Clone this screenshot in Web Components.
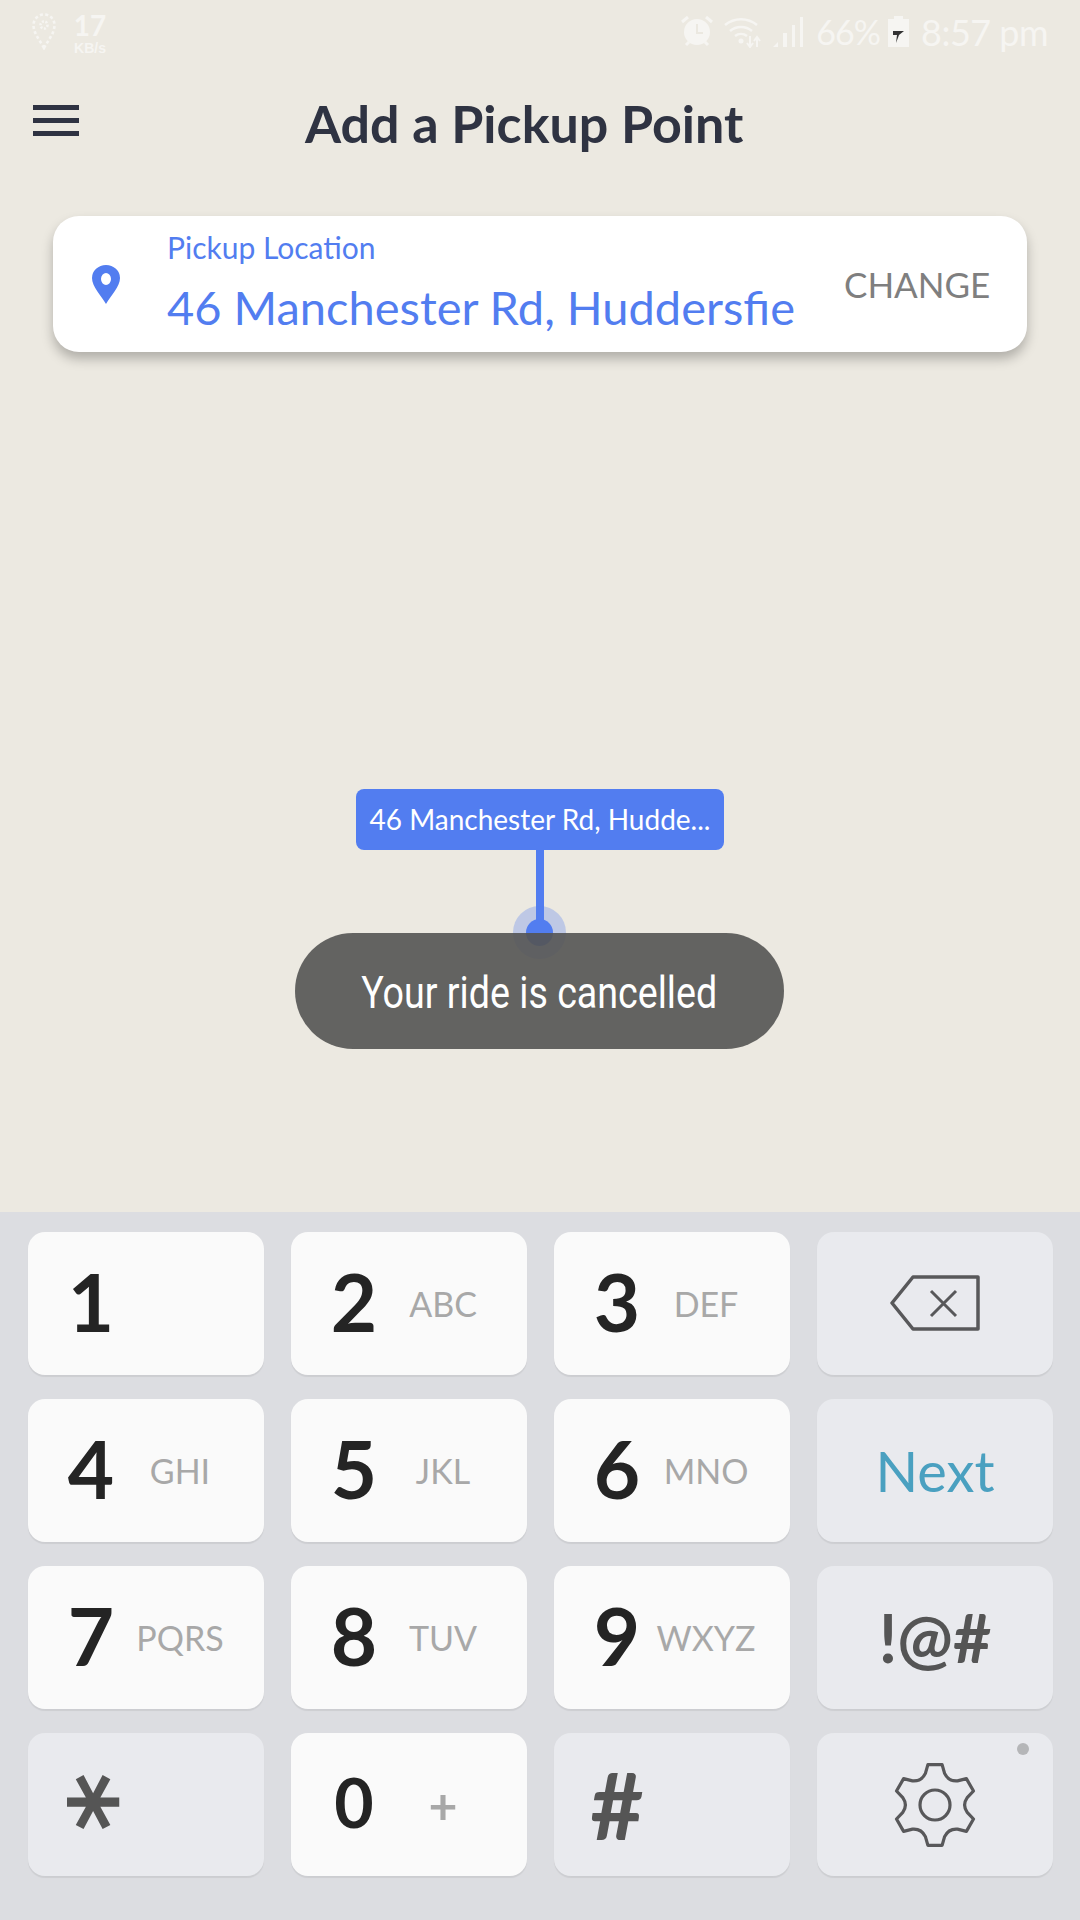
<!DOCTYPE html>
<html>
<head>
<meta charset="utf-8">
<style>
html,body{margin:0;padding:0;}
body{width:1080px;height:1920px;display:flex;flex-direction:column;overflow:hidden;background:#ece9e1;font-family:"Lato",sans-serif;}
</style>
</head>
<body>
<status-bar></status-bar>
<map-view>
  <app-header>Add a Pickup Point</app-header>
  <pickup-card label="Pickup Location" action="CHANGE">46 Manchester Rd, Huddersfie</pickup-card>
  <map-marker slot="over">46 Manchester Rd, Hudde...</map-marker>
  <toast-message slot="over">Your ride is cancelled</toast-message>
</map-view>
<dial-pad>
  <dial-key>1</dial-key>
  <dial-key sub="ABC">2</dial-key>
  <dial-key sub="DEF">3</dial-key>
  <dial-key kind="center"><svg width="90" height="56" viewBox="0 0 90 56" fill="none" stroke="#58585a" stroke-width="3.5" stroke-linejoin="round"><path d="M2 28 L23 2 H88 V54 H23 Z"/><path d="M41 16 L66 41 M66 16 L41 41" stroke-width="3"/></svg></dial-key>
  <dial-key sub="GHI">4</dial-key>
  <dial-key sub="JKL">5</dial-key>
  <dial-key sub="MNO">6</dial-key>
  <dial-key kind="center" tone="next">Next</dial-key>
  <dial-key sub="PQRS">7</dial-key>
  <dial-key sub="TUV">8</dial-key>
  <dial-key sub="WXYZ">9</dial-key>
  <dial-key kind="center" tone="symbols">!@#</dial-key>
  <dial-key kind="func" tone="star">*</dial-key>
  <dial-key sub="+" tone="plus">0</dial-key>
  <dial-key kind="func" tone="hash">#</dial-key>
  <dial-key kind="center" dot><gear-icon></gear-icon></dial-key>
</dial-pad>

<script>
const statusTpl = document.createElement('template');
statusTpl.innerHTML = `
<style>
:host{display:flex;justify-content:space-between;height:62px;color:#f6f5f2;font-family:"Lato",sans-serif;flex:none;}
.left{display:flex;padding:13px 0 0 32px;gap:16px;align-items:flex-start;}
.speed{display:flex;flex-direction:column;align-items:center;width:36px;}
.speed b{font-size:28px;line-height:25px;font-weight:700;}
.speed small{font:700 14px/14px "Liberation Sans",sans-serif;margin-top:3px;}
.right{display:flex;padding:16px 32px 0 0;align-items:flex-start;}
.pct{font-size:34px;line-height:32px;margin:0 8px 0 13px;letter-spacing:-1px;}
.time{font-size:36px;line-height:32px;margin-left:12px;letter-spacing:-.5px;width:127px;white-space:nowrap;}
svg{display:block;flex:none;}
</style>
<div class="left">
  <svg width="24" height="37" viewBox="0 0 24 37" fill="none" stroke="#f6f5f2" stroke-width="2.6" stroke-dasharray="3 2.4"><path d="M12 35 C7 26 1.500 20 1.500 12 A10.500 10.500 0 0 1 22.500 12 C22.500 20 17 26 12 35Z"/><circle cx="12" cy="12" r="3.500" stroke-dasharray="2 1.500"/></svg>
  <div class="speed"><b>17</b><small>KB/s</small></div>
</div>
<div class="right">
  <svg width="32" height="31" viewBox="0 0 32 31" style="margin-right:11px"><path d="M1 6 L7 1 M31 6 L25 1 M5 29 L8 26 M27 29 L24 26" stroke="#f6f5f2" stroke-width="3"/><circle cx="16" cy="16" r="13" fill="#f6f5f2"/><path d="M16 8 V17 H22" fill="none" stroke="#ebe8e0" stroke-width="2"/></svg>
  <svg width="37" height="32" viewBox="0 0 37 32" fill="none" stroke="#f6f5f2" stroke-width="2.500" style="margin-right:11px"><path d="M1 9 A25 25 0 0 1 33 9"/><path d="M6 15 A17 17 0 0 1 28 15"/><path d="M11 20 A10 10 0 0 1 23 20"/><circle cx="17" cy="25" r="2.500" fill="#f6f5f2" stroke="none"/><path d="M26 20 V30 M23 27 L26 31 L29 27 M33 31 V22 M30 25 L33 21 L36 25" stroke-width="2"/></svg>
  <svg width="31" height="31" viewBox="0 0 31 31" fill="#f6f5f2"><path d="M1 31 L6 26 V31Z M11 31 V17 H15 V31Z M20 31 V9 H23 V31Z M28 31 V1 H31 V31Z"/></svg>
  <span class="pct">66%</span>
  <svg width="21" height="31" viewBox="0 0 21 31"><path d="M6 0 H15 V3 H21 V31 H0 V3 H6Z" fill="#f6f5f2"/><path d="M5 15 H16 L11 19 L8 27 L9 19 H5Z" fill="#333"/></svg>
  <span class="time">8:57 pm</span>
</div>`;
class StatusBar extends HTMLElement{
  constructor(){
    super();
    this.attachShadow({mode:'open'});
    this.shadowRoot.appendChild(statusTpl.content.cloneNode(true));
  }
}
customElements.define('status-bar',StatusBar);

const mapTpl = document.createElement('template');
mapTpl.innerHTML = `
<style>
:host{display:block;position:relative;flex:1;background:#ece9e1;}
</style>
<slot></slot>
<slot name="over"></slot>`;
class MapView extends HTMLElement{
  constructor(){
    super();
    this.attachShadow({mode:'open'});
    this.shadowRoot.appendChild(mapTpl.content.cloneNode(true));
  }
}
customElements.define('map-view',MapView);

const headerTpl = document.createElement('template');
headerTpl.innerHTML = `
<style>
:host{display:flex;align-items:center;height:126px;padding:0 0 0 33px;box-sizing:border-box;}
.burger{display:flex;flex-direction:column;gap:8px;width:46px;margin-bottom:10px;}
.burger i{display:block;height:5px;background:#2f3342;}
h1{margin:0 0 4px 226px;font:700 52px/60px "Lato",sans-serif;color:#2f3342;white-space:nowrap;}
</style>
<div class="burger"><i></i><i></i><i></i></div>
<h1><slot></slot></h1>`;
class AppHeader extends HTMLElement{
  constructor(){
    super();
    this.attachShadow({mode:'open'});
    this.shadowRoot.appendChild(headerTpl.content.cloneNode(true));
  }
}
customElements.define('app-header',AppHeader);

const cardTpl = document.createElement('template');
cardTpl.innerHTML = `
<style>
:host{display:flex;align-items:center;height:136px;margin:28px 53px 0;background:#fff;border-radius:26px;box-shadow:0 7px 12px rgba(0,0,0,.25);font-family:"Lato",sans-serif;}
svg{margin:0 0 0 39px;flex:none;}
.text{margin:-5px 0 0 47px;width:632px;white-space:nowrap;color:#527df0;}
.label{font-size:30px;line-height:36px;}
.value{font-size:47px;line-height:54px;margin-top:15px;}
.action{margin-left:45px;font-size:35px;color:#7f7f7f;}
</style>
<svg width="28" height="39" viewBox="0 0 28 39"><path fill-rule="evenodd" fill="#527df0" d="M14 39 C9 30 0 22 0 13 A14 13 0 0 1 28 13 C28 22 19 30 14 39Z M14 8 A5 6 0 1 0 14 20 A5 6 0 1 0 14 8Z"/></svg>
<div class="text"><div class="label" id="label"></div><div class="value"><slot></slot></div></div>
<div class="action" id="action"></div>`;
class PickupCard extends HTMLElement{
  constructor(){
    super();
    this.attachShadow({mode:'open'});
    this.shadowRoot.appendChild(cardTpl.content.cloneNode(true));
    this.shadowRoot.querySelector('#label').textContent = this.getAttribute('label');
    this.shadowRoot.querySelector('#action').textContent = this.getAttribute('action');
  }
}
customElements.define('pickup-card',PickupCard);

const markerTpl = document.createElement('template');
markerTpl.innerHTML = `
<style>
:host{display:flex;flex-direction:column;align-items:center;position:absolute;left:356px;top:727px;width:368px;}
.tag{width:100%;height:61px;box-sizing:border-box;background:#527df0;border-radius:8px;color:#fff;font:28px/61px "Lato",sans-serif;text-align:center;white-space:nowrap;}
.line{width:8px;height:83px;background:#527df0;}
.halo{position:absolute;left:157px;top:117px;width:53px;height:53px;border-radius:50%;background:rgba(82,125,240,.3);display:flex;align-items:center;justify-content:center;}
.dot{width:27px;height:27px;border-radius:50%;background:#527df0;}
</style>
<div class="tag"><slot></slot></div>
<div class="line"></div>
<div class="halo"><div class="dot"></div></div>`;
class MapMarker extends HTMLElement{
  constructor(){
    super();
    this.attachShadow({mode:'open'});
    this.shadowRoot.appendChild(markerTpl.content.cloneNode(true));
  }
}
customElements.define('map-marker',MapMarker);

const toastTpl = document.createElement('template');
toastTpl.innerHTML = `
<style>
:host{display:flex;align-items:center;justify-content:center;position:absolute;left:295px;top:871px;width:489px;height:116px;border-radius:58px;background:rgba(84,84,83,.9);color:#fff;font:44px/50px "Roboto",sans-serif;white-space:nowrap;}
span{display:inline-block;transform:scaleX(.855);padding-top:4px;}
</style>
<span><slot></slot></span>`;
class ToastMessage extends HTMLElement{
  constructor(){
    super();
    this.attachShadow({mode:'open'});
    this.shadowRoot.appendChild(toastTpl.content.cloneNode(true));
  }
}
customElements.define('toast-message',ToastMessage);

const padTpl = document.createElement('template');
padTpl.innerHTML = `
<style>
:host{display:grid;grid-template-columns:repeat(4,236px);grid-auto-rows:143px;column-gap:27px;row-gap:24px;flex:none;height:708px;box-sizing:border-box;padding:20px 0 0 28px;background:#dcdde1;}
</style>
<slot></slot>`;
class DialPad extends HTMLElement{
  constructor(){
    super();
    this.attachShadow({mode:'open'});
    this.shadowRoot.appendChild(padTpl.content.cloneNode(true));
  }
}
customElements.define('dial-pad',DialPad);

const keyTpl = document.createElement('template');
keyTpl.innerHTML = `
<style>
:host{display:grid;grid-template-columns:31px 64px 114px;align-items:center;position:relative;background:#fafafa;border-radius:17px;box-shadow:0 2px 1px rgba(0,0,0,.07);color:#242424;font-family:"Lato",sans-serif;}
:host([kind=center]),:host([kind=func]){background:#e9eaee;}
:host([kind=center]){display:flex;justify-content:center;}
:host([kind=func]){color:#555;}
.main{grid-column:2;font-size:80px;line-height:90px;text-align:center;font-weight:700;margin-top:-6px;}
:host([kind=center]) .main{font-size:inherit;line-height:1;margin-top:0;font-weight:400;}
.sub{grid-column:3;font-size:34px;color:#a8a8a8;text-align:center;line-height:40px;}
:host([tone=plus]) .sub{font-size:50px;font-weight:700;}
:host([tone=plus]) .main{font-size:68px;}
:host([tone=next]) .main{font-size:56px;color:#4aa0c0;}
:host([tone=symbols]) .main{font-size:66px;font-weight:700;color:#555;}
:host([tone=hash]) .main{font-size:92px;margin-top:0;}
:host([tone=star]) .main{font-family:"DejaVu Sans",sans-serif;font-weight:700;font-size:112px;line-height:100px;margin-top:0;transform:translate(-16px,-3px) rotate(90deg);height:100px;}
.badge{display:none;position:absolute;right:24px;top:10px;width:12px;height:12px;border-radius:50%;background:#b5b6b8;}
:host([dot]) .badge{display:block;}
svg{display:block;}
</style>
<div class="main"><slot></slot></div>
<div class="sub" id="sub"></div>
<div class="badge"></div>`;
class DialKey extends HTMLElement{
  constructor(){
    super();
    this.attachShadow({mode:'open'});
    this.shadowRoot.appendChild(keyTpl.content.cloneNode(true));
    this.shadowRoot.querySelector('#sub').textContent = this.getAttribute('sub') || '';
  }
}
customElements.define('dial-key',DialKey);

// gear outline: six flat teeth joined by curved valleys
function gearPath(cx,cy){
  const pt = (r,a) => (cx+r*Math.cos(a*Math.PI/180)).toFixed(1)+' '+(cy+r*Math.sin(a*Math.PI/180)).toFixed(1);
  let d = '';
  for(let i=0;i<6;i++){
    const a = -90+i*60;
    d += (i?'L':'M')+pt(33,a-17)+' L'+pt(41,a-10)+' L'+pt(41,a+10)+' L'+pt(33,a+17)+' Q'+pt(27,a+30)+' '+pt(33,a+43)+' ';
  }
  return d+'Z';
}
class GearIcon extends HTMLElement{
  constructor(){
    super();
    this.attachShadow({mode:'open'});
    this.shadowRoot.innerHTML = `<style>:host{display:block;width:86px;height:86px;}svg{display:block;}</style>
    <svg width="86" height="86" viewBox="0 0 86 86" fill="none" stroke="#58585a" stroke-width="3.2" stroke-linejoin="round"><path d="${gearPath(43,43)}"/><circle cx="43" cy="43" r="15"/></svg>`;
  }
}
customElements.define('gear-icon',GearIcon);
</script>
</body>
</html>
